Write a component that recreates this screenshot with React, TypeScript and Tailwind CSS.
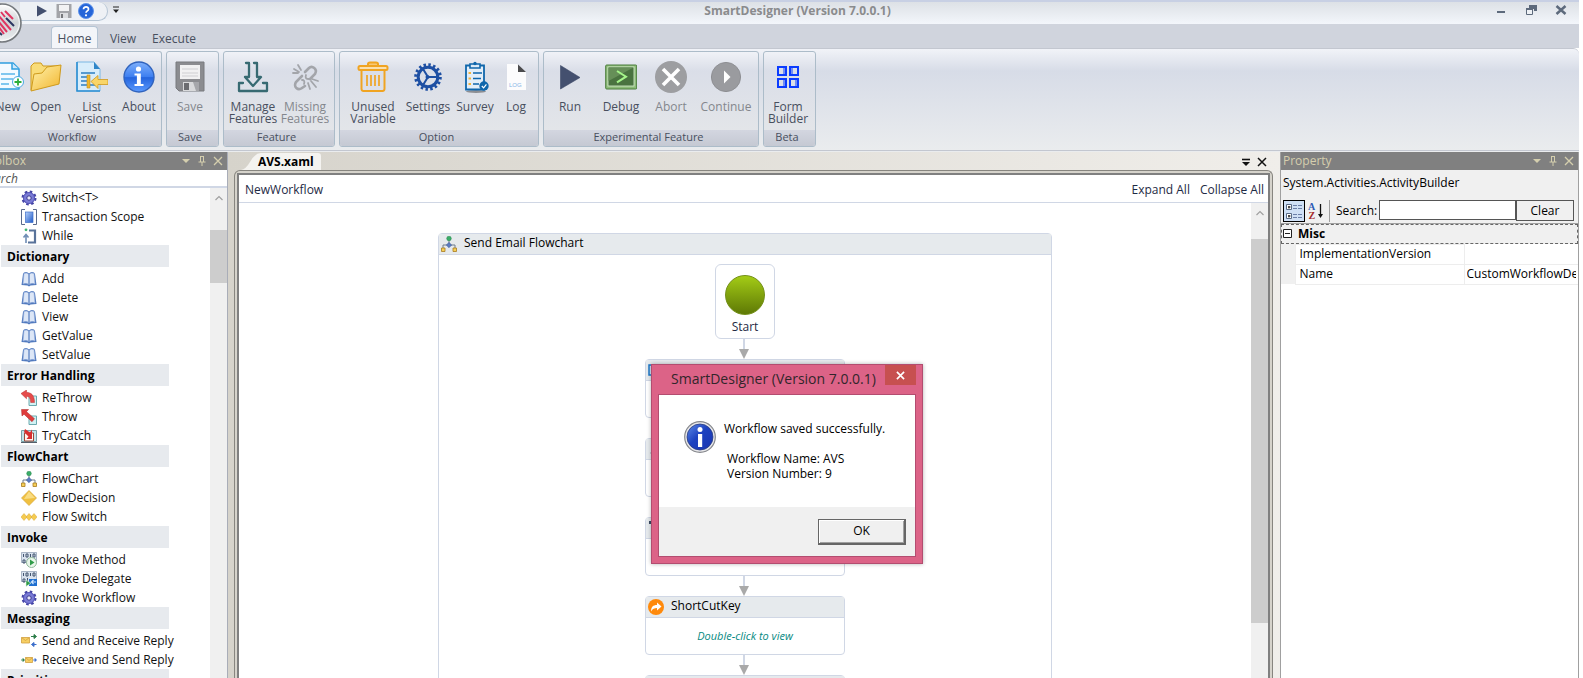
import type { ReactNode } from 'react'

/* ---------- ribbon icons (32x32) ---------- */

const Svg32 = ({ children }: { children: ReactNode }) => (
  <svg viewBox="0 0 32 32" className="h-8 w-8 shrink-0" aria-hidden="true">{children}</svg>
)

const NewIcon = () => (
  <Svg32>
    <path d="M5 2h16l6 6v20H5z" fill="#f4faff" stroke="#2f9fe0" strokeWidth="1.5" strokeLinejoin="round" />
    <path d="M20 2v6h7" fill="#cfe8fa" stroke="#2f9fe0" strokeWidth="1.5" />
    <path d="M9 13h14M9 18h12M9 23h8" stroke="#5ab6ea" strokeWidth="1.5" />
    <circle cx="26" cy="21" r="5.5" fill="#fff" stroke="#4aa9e2" />
    <path d="M26 17.5v7M22.5 21h7" stroke="#2fae3c" strokeWidth="1.8" />
  </Svg32>
)

const OpenIcon = () => (
  <Svg32>
    <defs>
      <linearGradient id="folder" x1="0" y1="0" x2="1" y2="1">
        <stop offset="0" stopColor="#fff3b0" />
        <stop offset="1" stopColor="#f2b52c" />
      </linearGradient>
    </defs>
    <path d="M1 29V5l3-3h7l2 3h14v5z" fill="#f9dc78" stroke="#cf9a1c" strokeLinejoin="round" />
    <path d="M1 30 4 13l8-1 5-6 14-2-2 19z" fill="url(#folder)" stroke="#cf9a1c" strokeLinejoin="round" />
  </Svg32>
)

const ListIcon = () => (
  <Svg32>
    <path d="M1 1h17l6 7v22H1z" fill="#d8edfb" stroke="#7ab8e4" />
    <path d="M1 1v29h23" fill="none" stroke="#2d8fd2" strokeWidth="1.6" />
    <path d="M18 1l6 7h-6z" fill="#2f86c8" />
    <path d="M5 12h14M5 16h6M5 20h6M5 24h6M14 24h7" stroke="#2c7fc2" strokeWidth="1.4" />
    <path d="M11 14h3v13h-3z" fill="#f0b82d" stroke="#c98f17" strokeWidth=".6" />
    <path d="M15 20.5l7-6v4h10v5H22v4z" fill="#f9d568" stroke="#cf981c" strokeWidth=".8" />
  </Svg32>
)

const AboutIcon = () => (
  <Svg32>
    <defs>
      <linearGradient id="about" x1="0" y1="0" x2="0" y2="1">
        <stop offset="0" stopColor="#7fb0fb" />
        <stop offset=".5" stopColor="#3c7ef0" />
        <stop offset=".52" stopColor="#2464dd" />
        <stop offset="1" stopColor="#5b9bff" />
      </linearGradient>
    </defs>
    <circle cx="16" cy="16" r="15" fill="url(#about)" stroke="#3063bd" strokeWidth="1.4" />
    <circle cx="15.5" cy="8" r="2.6" fill="#fff" />
    <path d="M11.5 12.5h6.3v10.5h2.7v2H11.5v-2h2.4v-8.500h-2.400z" fill="#fff" />
  </Svg32>
)

const FloppyIcon = () => (
  <Svg32>
    <path d="M2 1h28v29H5l-3-3z" fill="#8b8c90" stroke="#797a7e" />
    <path d="M6 4h20v14H6z" fill="#f1f1f2" />
    <path d="M8 8h16M8 12h16M8 15h16" stroke="#cfcfd2" />
    <path d="M9 21h16v9H9z" fill="#d9dadc" />
    <path d="M10 22h5v7h-5z" fill="#6c6d71" />
    <path d="M19 21h6v9h-3z" fill="#a6a7ab" />
  </Svg32>
)

const ManageIcon = () => (
  <Svg32>
    <g fill="none" stroke="#376a72" strokeWidth="2.3" strokeLinejoin="round" strokeLinecap="round">
      <path d="M9 2h3v14H8l8 9 8-9h-4V2h-3" />
      <path d="M6 22H2v8h28v-8h-4" />
    </g>
  </Svg32>
)

const MissingIcon = () => (
  <Svg32>
    <g fill="none" stroke="#a3a5aa" strokeWidth="2.6" strokeLinecap="round">
      <path d="M16 11l4-4c3-3 9 1 6 6l-5 5" />
      <path d="M16 25l-3 2c-4 3-9-1-6-6l6-6" />
      <path d="M17 14c-1 3 0 4 3 4M13 19c2 0 3 1 2 4" strokeWidth="1.8" />
      <path d="M5 8l5 3M9 4l3 5M4 12h5M19 22l2 6M22 20l5 6M23 18l6 2" strokeWidth="1.8" />
    </g>
  </Svg32>
)

const TrashIcon = () => (
  <Svg32>
    <g fill="none" stroke="#f0a422" strokeWidth="2" strokeLinejoin="round">
      <path d="M11 5V3q0-1.500 2-1.500h6q2 0 2 1.500v2" fill="#f7c877" />
      <rect x="1.5" y="5" width="29" height="4" rx="1.5" fill="#fae0b0" />
      <path d="M4.500 9.500V28q.2 2 2 2h19q1.800 0 2-2V9.500" />
      <path d="M10 14v11M14 14v11M18 14v11M22 14v11" strokeWidth="1.7" />
    </g>
  </Svg32>
)

const GearIcon = () => (
  <Svg32>
    <circle cx="16" cy="16" r="12" fill="none" stroke="#1d4fa3" strokeWidth="3.6" strokeDasharray="2.4 2.31" />
    <circle cx="16" cy="16" r="9.8" fill="none" stroke="#1d4fa3" strokeWidth="3" />
    <path d="M16 16h9M16 16l-5-8M16 16l-5 8" stroke="#1d4fa3" strokeWidth="2" />
    <circle cx="15.5" cy="16" r="2" fill="#1d4fa3" />
  </Svg32>
)

const SurveyIcon = () => (
  <Svg32>
    <ellipse cx="17" cy="30.5" rx="10" ry="1.5" fill="#8d8f94" />
    <path d="M7 4.500h18v24H7z" fill="#e3eef8" stroke="#0f66ab" strokeWidth="1.8" />
    <path d="M11 3h10v4H11z" fill="#dbeaf7" stroke="#0f66ab" strokeWidth="1.6" />
    <circle cx="16" cy="2.5" r="1.7" fill="#0f66ab" />
    <path d="M14 12h9M14 17.500h8M14 23h6" stroke="#0f66ab" strokeWidth="1.7" />
    <path d="M9.500 12h2.500M9.500 17.500h2.500M9.500 23h2.500" stroke="#f3b33d" strokeWidth="2.2" />
    <circle cx="25" cy="25" r="4.7" fill="#0f66ab" />
    <path d="M22.800 25l1.800 1.800 2.800-3.400" fill="none" stroke="#fff" strokeWidth="1.2" />
  </Svg32>
)

const LogIcon = () => (
  <Svg32>
    <path d="M7 3h10l9 8v18H7z" fill="#fcfcfd" />
    <path d="M18 3.500l8 7.500h-8z" fill="#4b4b4d" />
    <text x="9" y="26" fontSize="6" className="fill-[#84b4e6] font-['Liberation_Sans']">LOG</text>
  </Svg32>
)

const RunIcon = () => (
  <Svg32>
    <path d="M6.500 4.500v23.500L26 16.500z" fill="#44506f" stroke="#3a4665" strokeWidth=".6" />
  </Svg32>
)

const DebugIcon = () => (
  <Svg32>
    <rect x=".7" y="4" width="31" height="24" rx="1" fill="#8dbb79" stroke="#4a7d3c" />
    <rect x="3" y="6" width="26" height="19" fill="#4a7340" stroke="#dff3d4" strokeWidth=".8" />
    <path d="M3.500 6.500h25L3.500 20z" fill="#668f58" />
    <path d="M12 10l9 5.700-9 5.700" fill="none" stroke="#a5f58a" strokeWidth="2" />
  </Svg32>
)

const AbortIcon = () => (
  <Svg32>
    <circle cx="16" cy="16" r="16" fill="#9d9ea1" />
    <path d="M8 8l16 16M24 8L8 24" stroke="#fff" strokeWidth="3.6" />
  </Svg32>
)

const ContinueIcon = () => (
  <Svg32>
    <circle cx="16" cy="16" r="14.6" fill="#9a9b9f" stroke="#8e8f93" />
    <path d="M14 9.500v13l6.500-6.500z" fill="#fff" />
  </Svg32>
)

const FormIcon = () => (
  <Svg32>
    <g fill="none" stroke="#0b3cff" strokeWidth="2">
      <path d="M6 6h8v8H6zM18 6h8v8h-8zM6 18h8v8H6zM18 18h8v8h-8z" />
      <path d="M12 6v8M20 6v8M12 18v8M24 18v8" strokeWidth="1" />
    </g>
  </Svg32>
)

/* ---------- toolbox icons (16x16) ---------- */

const Svg16 = ({ children }: { children: ReactNode }) => (
  <svg viewBox="0 0 16 16" className="h-4 w-4 shrink-0" aria-hidden="true">{children}</svg>
)

const CogIcon = () => (
  <Svg16>
    <circle cx="8" cy="8" r="6" fill="#7373cf" stroke="#4444a4" strokeWidth="3" strokeDasharray="2.4 2.31" />
    <circle cx="8" cy="8" r="5.5" fill="#7a7bd6" stroke="#5252b3" strokeWidth=".8" />
    <circle cx="8" cy="8" r="2.2" fill="#e4e4fa" stroke="#39398f" />
  </Svg16>
)

const ScopeIcon = () => (
  <Svg16>
    <defs>
      <linearGradient id="scope" x1="0" y1="0" x2="1" y2="1">
        <stop offset="0" stopColor="#b8d2fb" />
        <stop offset="1" stopColor="#1f5ac8" />
      </linearGradient>
    </defs>
    <path d="M4 .5H.5v15H4M12 .5h3.500v15H12" fill="none" stroke="#5a6a8c" />
    <rect x="4.5" y="3" width="7.5" height="10.5" fill="url(#scope)" stroke="#3f6fca" strokeWidth=".7" />
  </Svg16>
)

const WhileIcon = () => (
  <Svg16>
    <path d="M8 2.500h6v12H7" fill="none" stroke="#59739a" strokeWidth="2.2" />
    <path d="M5 15V8M2.500 9.500L5 6.500l2.500 3" fill="none" stroke="#6f8db5" strokeWidth="1.6" />
    <circle cx="5" cy="1.8" r="1.4" fill="#3cb66e" />
  </Svg16>
)

const BookIcon = () => (
  <Svg16>
    <path d="M.5 14L2 3l1-1.500Q6 0 8 2.500 10 0 13 1.500L14 3l1.500 11-6 .5L8 15.500l-1.500-1z" fill="#4f78bd" />
    <path d="M3 2.500Q6 1 7.800 3.500v10Q5 11.500 2 13zM13 2.500Q10 1 8.200 3.500v10Q11 11.500 14 13z" fill="#dde7f7" stroke="#8ea9da" strokeWidth=".6" />
    <path d="M8 3v11" stroke="#6f90c8" />
  </Svg16>
)

const ReThrowIcon = () => (
  <Svg16>
    <path d="M8 6h7.500v9.500H8z" fill="#d2f2f4" stroke="#6aa9ae" />
    <path d="M0 3.500L5.500 0v2.300C10 2.500 13.500 5 13.500 12.500h-3.800C9.700 8.500 8.500 6.500 5.500 6.300v2.500z" fill="#e64b4b" stroke="#b83232" strokeWidth=".5" />
  </Svg16>
)

const ThrowIcon = () => (
  <Svg16>
    <path d="M8 7h7.500v8.500H8z" fill="#d2f2f4" stroke="#6aa9ae" />
    <path d="M.5.5h7L5.500 2.700l8 7-2.500 3-8-7.500L1 7z" fill="#e03c3c" stroke="#a82626" strokeWidth=".5" />
  </Svg16>
)

const TryCatchIcon = () => (
  <Svg16>
    <path d="M.5 2.500h15v11H.5z" fill="#c2e4ea" stroke="#7aa3ab" />
    <path d="M3.500 5h9v8h-9z" fill="#fff3ee" stroke="#9b4a3a" />
    <path d="M4 1l5 3.500 2-3V11H5.500l2-2.500L3 4z" fill="#d83030" />
    <path d="M0 14.500h16" stroke="#55606b" />
  </Svg16>
)

const FlowchartIcon = () => (
  <Svg16>
    <path d="M8 4v5M8 9H2v3M8 9h6v3" fill="none" stroke="#6f7c8d" />
    <circle cx="8" cy="2.5" r="2.3" fill="#3aad68" stroke="#24824a" strokeWidth=".5" />
    <path d="M8 6.500L10.700 9 8 11.700 5.300 9z" fill="#5c7cc0" stroke="#3d5b9e" strokeWidth=".6" />
    <path d="M.5 12h3.500v3.500H.5zM12 12h3.500v3.500H12z" fill="#f6cf58" stroke="#a87b1f" strokeWidth=".8" />
  </Svg16>
)

const DecisionIcon = () => (
  <Svg16>
    <path d="M8 .5L15.500 8 8 15.500.5 8z" fill="#f0c040" stroke="#d9a93a" strokeWidth=".7" />
    <path d="M8 1.500L14 8l-11 1z" fill="#f9dc82" />
  </Svg16>
)

const SwitchIcon = () => (
  <Svg16>
    <path d="M3 4.500L6 8l-3 3.500L0 8zM8 4.500L11 8l-3 3.500L5 8zM13 4.500L16 8l-3 3.500L10 8z" fill="#f5cb50" stroke="#d9a93a" strokeWidth=".5" />
  </Svg16>
)

const BinaryBase = () => (
  <>
    <path d="M.5.5h15v10H.5z" fill="#d9e2ee" stroke="#7c8da5" strokeWidth=".6" />
    <path d="M2.500 2v3M5 2h2v3H5zM9.500 2v3M12 2h2v3h-2zM2 8h2v3H2zM6.500 7v3" fill="none" stroke="#42546f" strokeWidth="1" />
  </>
)

const MethodIcon = () => (
  <Svg16>
    <BinaryBase />
    <circle cx="10.5" cy="10.5" r="5" fill="#e9f7ea" stroke="#91b89a" />
    <path d="M9 7.500v6l4.500-3z" fill="#2f9c48" />
  </Svg16>
)

const DelegateIcon = () => (
  <Svg16>
    <BinaryBase />
    <path d="M8 15V8h8v7z" fill="#1f6fd0" />
    <path d="M5 9v6.500l5-3.300z" fill="#2f9c48" stroke="#e6f4e8" strokeWidth=".6" />
    <path d="M15 11h-4M12.500 9l-2 2 2 2" fill="none" stroke="#cfe6ff" strokeWidth="1.2" />
  </Svg16>
)

const SendIcon = () => (
  <Svg16>
    <path d="M.5 4.500h8v5.500h-8z" fill="#f7cf63" stroke="#d0a040" strokeWidth=".8" />
    <path d="M.5 4.500l4 3 4-3" fill="none" stroke="#d0a040" strokeWidth=".8" />
    <path d="M10 3.500h3M13 1.500l2.500 2-2.500 2z" fill="#2c7d49" stroke="#2c7d49" />
    <path d="M15.500 11.500h-3M13 9.500l-2.500 2 2.500 2z" fill="#3c6fcb" stroke="#3c6fcb" />
  </Svg16>
)

const ReceiveIcon = () => (
  <Svg16>
    <path d="M4.500 5.500h7v5h-7z" fill="#f7cf63" stroke="#d0a040" strokeWidth=".8" />
    <path d="M4.500 5.500L8 8.500l3.500-3" fill="none" stroke="#d0a040" strokeWidth=".8" />
    <path d="M0 8h2M2 6.500L3.500 8 2 9.500z" fill="#2c7d49" stroke="#2c7d49" strokeWidth=".8" />
    <path d="M12 8h2M14 6.500L15.500 8 14 9.500z" fill="#3c6fcb" stroke="#3c6fcb" strokeWidth=".8" />
  </Svg16>
)

const ShortcutIcon = () => (
  <Svg16>
    <circle cx="8" cy="8" r="8" fill="#ff8a0c" />
    <path d="M3 12.500C3 8 5 6 9 6V3.500L13.500 7.500 9 11.500V9C6.500 9 4.500 9.500 3 12.500z" fill="#fff" />
  </Svg16>
)

/* ---------- ribbon ---------- */

type Tool = { icon: () => ReactNode; label: string; width: string; disabled?: boolean }

const ribbonGroups: { title: string; width: string; align: string; tools: Tool[] }[] = [
  {
    title: 'Workflow', width: 'w-[162px] rounded-l-none border-l-0', align: 'justify-end',
    tools: [
      { icon: NewIcon, label: 'New', width: 'w-[34px]' },
      { icon: OpenIcon, label: 'Open', width: 'w-[42px]' },
      { icon: ListIcon, label: 'List\nVersions', width: 'w-[50px]' },
      { icon: AboutIcon, label: 'About', width: 'w-[44px]' },
    ],
  },
  {
    title: 'Save', width: 'w-[53px]', align: 'justify-start',
    tools: [{ icon: FloppyIcon, label: 'Save', width: 'w-[46px]', disabled: true }],
  },
  {
    title: 'Feature', width: 'w-[112px]', align: 'justify-center',
    tools: [
      { icon: ManageIcon, label: 'Manage\nFeatures', width: 'w-[52px]' },
      { icon: MissingIcon, label: 'Missing\nFeatures', width: 'w-[52px]', disabled: true },
    ],
  },
  {
    title: 'Option', width: 'w-[200px]', align: 'justify-end',
    tools: [
      { icon: TrashIcon, label: 'Unused\nVariable', width: 'w-[54px]' },
      { icon: GearIcon, label: 'Settings', width: 'w-[56px]' },
      { icon: SurveyIcon, label: 'Survey', width: 'w-[38px]' },
      { icon: LogIcon, label: 'Log', width: 'w-[44px]' },
    ],
  },
  {
    title: 'Experimental Feature', width: 'w-[216px]', align: 'justify-start',
    tools: [
      { icon: RunIcon, label: 'Run', width: 'w-[52px]' },
      { icon: DebugIcon, label: 'Debug', width: 'w-[50px]' },
      { icon: AbortIcon, label: 'Abort', width: 'w-[50px]', disabled: true },
      { icon: ContinueIcon, label: 'Continue', width: 'w-[60px]', disabled: true },
    ],
  },
  {
    title: 'Beta', width: 'w-[53px]', align: 'justify-start',
    tools: [{ icon: FormIcon, label: 'Form\nBuilder', width: 'w-[48px]' }],
  },
]

function TitleBar() {
  return (
    <header className="relative flex h-6 shrink-0 items-start border-t-2 border-[#c8d0e4] bg-linear-to-b from-[#dde1e6] to-[#f3f6fb]">
      <svg viewBox="0 0 30 44" className="absolute left-0 top-0 z-10 h-11 w-[30px]" aria-hidden="true">
        <defs>
          <linearGradient id="orb" x1="0" y1="0" x2="0" y2="1">
            <stop offset="0" stopColor="#fdfdfd" />
            <stop offset=".5" stopColor="#cfd3d6" />
            <stop offset="1" stopColor="#eef1f3" />
          </linearGradient>
        </defs>
        <circle cx="2" cy="21" r="19" fill="url(#orb)" stroke="#75797d" strokeWidth="1.6" />
        <circle cx="2" cy="21" r="17.3" fill="none" stroke="#fff" strokeOpacity=".8" />
        <g strokeWidth="2" fill="none">
          <path d="M5 9l8 8M1 10l4 5M-1 14l12 14M-2 19l9 11M-2 24l6 8" stroke="#e03560" />
          <path d="M6 16l8 8M-6 26l8 7" stroke="#2c3561" />
        </g>
      </svg>
      <div className="ml-5 flex h-[19px] w-[88px] items-center rounded-r-full rounded-bl-xl border border-l-0 border-t-0 border-[#b4c4d4] bg-[#eef1f5] pl-4">
        <button type="button" aria-label="Run" className="mr-2">
          <svg viewBox="0 0 12 12" className="h-3 w-3"><path d="M1 .5v11L11 6z" fill="#44506f" /></svg>
        </button>
        <button type="button" aria-label="Save" className="mr-1.5">
          <svg viewBox="0 0 16 16" className="h-4 w-4">
            <path d="M.5 1h15v14H.5z" fill="#a3a4a8" />
            <path d="M3 2h10v6H3z" fill="#f2f2f3" />
            <path d="M4 10h8v5H4z" fill="#dcdde0" />
            <path d="M5 11h2v4H5z" fill="#77787c" />
          </svg>
        </button>
        <button type="button" aria-label="Help">
          <svg viewBox="0 0 16 16" className="h-4 w-4">
            <circle cx="8" cy="8" r="7.5" fill="#2565d8" stroke="#5f93ea" />
            <path d="M5.500 6.300C5.500 3 10.700 3.200 10.500 6.200 10.400 7.800 8 8 8 9.800" fill="none" stroke="#fff" strokeWidth="1.7" />
            <circle cx="8" cy="12.3" r="1.1" fill="#fff" />
          </svg>
        </button>
      </div>
      <button type="button" aria-label="Customize quick access" className="ml-1 mt-1">
        <svg viewBox="0 0 8 8" className="h-2 w-2"><path d="M1 1h6" stroke="#222" /><path d="M1 3.500h6L4 7z" fill="#222" /></svg>
      </button>
      <h1 className="flex-1 pr-5 text-center text-xs leading-[18px] font-bold text-[#8a8b8d]">SmartDesigner (Version 7.0.0.1)</h1>
      <div className="flex items-center gap-[18px] pr-3 pt-[3px] text-[#5d6a7c]">
        <button type="button" aria-label="Minimize">
          <svg viewBox="0 0 12 10" className="h-[10px] w-3"><path d="M2 6h8v2H2z" fill="currentColor" /></svg>
        </button>
        <button type="button" aria-label="Restore">
          <svg viewBox="0 0 12 10" className="h-[10px] w-3">
            <path d="M4 0h8v6h-3v-2H4z" fill="currentColor" />
            <path d="M1.500 4.500h6v5h-6z" fill="#eef1f5" stroke="currentColor" />
            <path d="M1 3h7v2H1z" fill="currentColor" />
          </svg>
        </button>
        <button type="button" aria-label="Close">
          <svg viewBox="0 0 12 10" className="h-[10px] w-3"><path d="M1.500 1l9 8M10.500 1l-9 8" stroke="currentColor" strokeWidth="2.5" /></svg>
        </button>
      </div>
    </header>
  )
}

function Ribbon() {
  return (
    <>
      <nav className="flex h-6 shrink-0 items-end bg-[#d0d4dd] pl-[51px] text-xs text-[#484f5e]">
        <button type="button" className="h-[22px] w-[47px] rounded-t-sm border border-b-0 border-[#b4c4d4] bg-[#f3f5f9] pt-0.5">Home</button>
        <button type="button" className="h-[22px] w-[50px] pt-[3px]">View</button>
        <button type="button" className="h-[22px] w-[52px] pt-[3px]">Execute</button>
      </nav>
      <section className="flex h-[103px] shrink-0 gap-1 rounded-tr-md border-y border-[#c3c7d0] bg-linear-to-b from-[#f1f3f8] from-0% via-[#d7dce7] via-22% to-[#eaecee] to-100% pt-0.5">
        {ribbonGroups.map(group => (
          <div
            key={group.title}
            className={`flex h-24 shrink-0 flex-col overflow-hidden rounded-[3px] border border-[#acbcc9] bg-linear-to-b from-[#f0f2f7] from-0% via-[#dadee8] via-20% to-[#e4e6e9] to-90% ${group.width}`}
          >
            <div className={`flex flex-1 ${group.align}`}>
              {group.tools.map(({ icon: Icon, label, width, disabled }) => (
                <button
                  key={label}
                  type="button"
                  disabled={disabled}
                  className={`flex shrink-0 flex-col items-center gap-2 pt-[9px] text-xs leading-3 whitespace-pre text-[#484f5e] disabled:text-[#84878d] ${width}`}
                >
                  <Icon />
                  <span>{label}</span>
                </button>
              ))}
            </div>
            <div className="h-4 bg-linear-to-b from-[#d3d6e0] to-[#c5c9d3] pr-[5px] text-center text-[11px] leading-[14px] text-[#484f5e]">
              <span className={group.title === 'Workflow' ? 'pr-3' : ''}>{group.title}</span>
            </div>
          </div>
        ))}
      </section>
    </>
  )
}

/* ---------- docked panels ---------- */

function PanelHeader({ title, inset }: { title: string; inset: string }) {
  return (
    <div className="flex h-[18px] shrink-0 items-center overflow-hidden bg-[#808080] pr-1 text-[#d5cfae]">
      <h2 className={`flex-1 text-xs ${inset}`}>{title}</h2>
      <div className="flex items-center gap-1.5">
        <button type="button" aria-label={`${title} menu`}>
          <svg viewBox="0 0 10 10" className="h-[10px] w-[10px]"><path d="M1 3h8L5 7z" fill="currentColor" /></svg>
        </button>
        <button type="button" aria-label={`Pin ${title}`}>
          <svg viewBox="0 0 10 10" className="h-[10px] w-[10px]"><path d="M3 .5h4M3.500 0v6M6.500 0v6M1.500 6h7M5 6v4" fill="none" stroke="currentColor" /></svg>
        </button>
        <button type="button" aria-label={`Close ${title}`}>
          <svg viewBox="0 0 10 10" className="h-[10px] w-[10px]"><path d="M1 1l8 8M9 1L1 9" stroke="currentColor" strokeWidth="1.3" /></svg>
        </button>
      </div>
    </div>
  )
}

const ScrollArrow = () => (
  <svg viewBox="0 0 10 6" className="mx-auto h-[6px] w-[10px]" aria-hidden="true">
    <path d="M1.500 5L5 1.500 8.500 5" fill="none" stroke="#a0a0a0" strokeWidth="1.2" />
  </svg>
)

const toolbox: { category?: string; items: { icon: () => ReactNode; label: string }[] }[] = [
  {
    items: [
      { icon: CogIcon, label: 'Switch<T>' },
      { icon: ScopeIcon, label: 'Transaction Scope' },
      { icon: WhileIcon, label: 'While' },
    ],
  },
  {
    category: 'Dictionary',
    items: ['Add', 'Delete', 'View', 'GetValue', 'SetValue'].map(label => ({ icon: BookIcon, label })),
  },
  {
    category: 'Error Handling',
    items: [
      { icon: ReThrowIcon, label: 'ReThrow' },
      { icon: ThrowIcon, label: 'Throw' },
      { icon: TryCatchIcon, label: 'TryCatch' },
    ],
  },
  {
    category: 'FlowChart',
    items: [
      { icon: FlowchartIcon, label: 'FlowChart' },
      { icon: DecisionIcon, label: 'FlowDecision' },
      { icon: SwitchIcon, label: 'Flow Switch' },
    ],
  },
  {
    category: 'Invoke',
    items: [
      { icon: MethodIcon, label: 'Invoke Method' },
      { icon: DelegateIcon, label: 'Invoke Delegate' },
      { icon: CogIcon, label: 'Invoke Workflow' },
    ],
  },
  {
    category: 'Messaging',
    items: [
      { icon: SendIcon, label: 'Send and Receive Reply' },
      { icon: ReceiveIcon, label: 'Receive and Send Reply' },
    ],
  },
  { category: 'Primitives', items: [] },
]

function Toolbox() {
  return (
    <aside className="flex w-[228px] shrink-0 flex-col overflow-hidden border-r border-[#a9adb8] bg-white">
      <PanelHeader title="Toolbox" inset="-ml-[19px]" />
      <input
        type="text"
        aria-label="Search toolbox"
        placeholder="Search"
        className="-ml-[18px] h-[18px] shrink-0 border-b-2 border-[#d0d7e5] text-xs italic outline-none placeholder:text-[#555]"
      />
      <div className="flex min-h-0 flex-1">
        <div className="flex-1 overflow-hidden pl-px">
          {toolbox.map(({ category, items }) => (
            <section key={category ?? 'top'}>
              {category && <h3 className="mb-0.5 h-[22px] w-[168px] bg-[#e7eaee] pl-1.5 text-xs leading-6 font-bold">{category}</h3>}
              <ul>
                {items.map(({ icon: Icon, label }) => (
                  <li key={label} className="flex h-[19px] items-center gap-[5px] pl-5 text-xs whitespace-nowrap text-[#111]">
                    <Icon />
                    <span>{label}</span>
                  </li>
                ))}
              </ul>
            </section>
          ))}
        </div>
        <div className="w-[17px] shrink-0 bg-[#f0f0f0] pt-[7px]">
          <ScrollArrow />
          <div className="mt-[29px] h-[53px] bg-[#cdcdcd]" />
        </div>
      </div>
    </aside>
  )
}

/* ---------- designer ---------- */

const Arrow = () => (
  <svg viewBox="0 0 12 20" className="h-5 w-3" aria-hidden="true">
    <path d="M4 0h2v11H4z" fill="#d0d7e5" />
    <path d="M0 10h10L5 20z" fill="#a9a9a9" />
  </svg>
)

function ActivityNode({ title, icon }: { title: string; icon: ReactNode }) {
  return (
    <div className="h-[59px] w-[200px] rounded-sm border border-[#d0d7e5] bg-white">
      <div className="flex h-[21px] items-center gap-[7px] border-b border-[#d0d7e5] bg-[#e6eaed] pl-0.5 text-xs">
        {icon}
        <span className="pb-0.5">{title}</span>
      </div>
      {title && <p className="text-center text-[11px] leading-9 italic text-[#078a82]">Double-click to view</p>}
    </div>
  )
}

function Designer() {
  return (
    <main className="flex min-w-0 flex-1 flex-col bg-linear-to-r from-[#d6d3cb] to-[#f0eeea] pr-[7px] pl-1.5">
      <div className="flex h-[18px] shrink-0 items-end pl-[7px]">
        <button type="button" className="relative h-[17px] w-[80px] pl-[17px] text-left text-xs leading-4 font-bold text-black">
          <svg viewBox="0 0 80 17" className="absolute left-0 top-0 h-[17px] w-[80px]" aria-hidden="true">
            <path d="M0 17Q5 16 9 9 14 0 20 0h57q3 0 3 3v14z" fill="#f4f3f0" />
          </svg>
          <span className="relative">AVS.xaml</span>
        </button>
        <div className="ml-auto flex gap-1.5 self-center pr-1.5 pt-0.5">
          <button type="button" aria-label="Document list">
            <svg viewBox="0 0 10 10" className="h-[10px] w-[10px]"><path d="M1 2.500h8" stroke="#111" strokeWidth="1.6" /><path d="M1 5h8L5 9z" fill="#111" /></svg>
          </button>
          <button type="button" aria-label="Close document">
            <svg viewBox="0 0 10 10" className="h-[10px] w-[10px]"><path d="M1 1l8 8M9 1L1 9" stroke="#111" strokeWidth="1.5" /></svg>
          </button>
        </div>
      </div>
      <div className="flex min-h-0 flex-1 rounded-t-md border border-b-0 border-[#87857f] bg-[#d6d3cb] px-0.5 pt-0.5">
        <div className="flex min-w-0 flex-1 flex-col border-2 border-b-0 border-[#808080] bg-white">
          <div className="flex h-7 shrink-0 items-center gap-[10px] border-b border-[#d0d7e5] pt-0.5 pl-1.5 pr-1 text-xs text-[#1e2a44]">
            <span className="flex-1">NewWorkflow</span>
            <button type="button">Expand All</button>
            <button type="button">Collapse All</button>
          </div>
          <div className="flex min-h-0 flex-1">
            <div className="flex flex-1 flex-col items-center overflow-hidden pt-[30px]">
              <div className="w-[614px] shrink-0 rounded-t-sm border border-[#d0d7e5]">
                <div className="flex h-[21px] items-center gap-[7px] border-b border-[#d0d7e5] bg-[#e6eaed] pl-0.5 text-xs leading-4">
                  <FlowchartIcon />
                  <span className="pb-0.5">Send Email Flowchart</span>
                </div>
                <div className="flex flex-col items-center pt-[9px]">
                  <div className="flex h-[75px] w-[60px] flex-col items-center rounded-md border border-[#d0d7e5] pt-[10px] text-xs text-[#1e2a44]">
                    <div className="h-10 w-10 rounded-full border border-[#738f18] bg-linear-to-b from-[#a4cc16] to-[#5f7a06]" />
                    <span className="pt-1">Start</span>
                  </div>
                  <Arrow />
                  <ActivityNode title="" icon={<svg viewBox="0 0 16 16" className="h-4 w-4"><path d="M1 3h14v10H1z" fill="#cfe4f7" stroke="#1e78c8" strokeWidth="1.5" /></svg>} />
                  <Arrow />
                  <ActivityNode title="" icon={<svg viewBox="0 0 16 16" className="h-4 w-4"><path d="M2 12h12" stroke="#aab0b8" /></svg>} />
                  <Arrow />
                  <ActivityNode title="" icon={<svg viewBox="0 0 16 16" className="h-4 w-4"><path d="M1 1h8v3H1z" fill="#3a4a63" /></svg>} />
                  <Arrow />
                  <ActivityNode title="ShortCutKey" icon={<ShortcutIcon />} />
                  <Arrow />
                  <ActivityNode title="" icon={null} />
                </div>
              </div>
            </div>
            <div className="w-[17px] shrink-0 bg-[#f0f0f0] pt-[7px]">
              <ScrollArrow />
              <div className="mt-[23px] h-[384px] bg-[#cdcdcd]" />
            </div>
          </div>
        </div>
      </div>
    </main>
  )
}

function PropertyPanel() {
  return (
    <aside className="flex w-[299px] shrink-0 flex-col overflow-hidden border-x border-[#a0a0a0] bg-white">
      <PanelHeader title="Property" inset="pl-0.5" />
      <div className="shrink-0 border-b border-[#a0a0a0] bg-[#f0f0f0] pr-1 pl-0.5">
        <p className="pt-1 pb-2 text-xs leading-[18px]">System.Activities.ActivityBuilder</p>
        <div className="flex h-[23px] items-start text-xs">
          <button type="button" aria-label="Categorized" className="h-[22px] w-[22px] border border-black bg-[#cfe0f5]">
            <svg viewBox="0 0 20 20" className="h-5 w-5">
              <path d="M2.500 3.500h5v5h-5zM2.500 12.500h5v5h-5z" fill="#fff" stroke="#5a6c86" />
              <path d="M4 6h2.500M5 5v2.500M4 15h2.500M5 14v2.500" stroke="#111" />
              <path d="M9 4.500h4M9 7.500h4M9 13.500h4M9 16.500h4M14 4.500h4M14 7.500h4M14 13.500h4M14 16.500h4" stroke="#6b7fa8" />
            </svg>
          </button>
          <button type="button" aria-label="Alphabetical" className="ml-0.5 h-[22px] w-[18px]">
            <svg viewBox="0 0 18 20" className="h-5 w-[18px]">
              <text x="1" y="9" fontSize="10" className="fill-[#2d5bb5] font-['Liberation_Serif'] font-bold">A</text>
              <text x="1.5" y="18" fontSize="10" className="fill-[#a52a2a] font-['Liberation_Serif'] font-bold">Z</text>
              <path d="M13.500 3v12" stroke="#111" strokeWidth="1.3" />
              <path d="M11 13h5l-2.500 4z" fill="#111" />
            </svg>
          </button>
          <div className="ml-1 h-[22px] w-px bg-[#a0a0a0]" />
          <label htmlFor="property-search" className="pl-1.5 leading-[22px]">Search:</label>
          <input id="property-search" type="text" className="ml-0.5 h-5 min-w-0 flex-1 border border-[#555] bg-white px-1 outline-none" />
          <button type="button" className="h-[21px] w-[58px] border border-[#555] bg-[#f0f0f0]">Clear</button>
        </div>
      </div>
      <table className="w-full table-fixed border-collapse text-xs">
        <colgroup>
          <col className="w-[14px]" />
          <col className="w-[169px]" />
          <col />
        </colgroup>
        <tbody>
          <tr className="h-5 bg-[#f0f0f0] outline-1 -outline-offset-1 outline-dashed outline-[#666]">
            <th colSpan={3} className="text-left">
              <span className="flex items-center gap-1.5 pl-0.5">
                <svg viewBox="0 0 9 9" className="h-[9px] w-[9px]"><path d="M.5.5h8v8h-8z" fill="#fff" stroke="#222" /><path d="M2 4.500h5" stroke="#222" /></svg>
                Misc
              </span>
            </th>
          </tr>
          <tr className="h-5">
            <td className="bg-[#f0f0f0]" />
            <td className="border border-[#ededed] pl-1">ImplementationVersion</td>
            <td className="border-b border-[#ededed]" />
          </tr>
          <tr className="h-5">
            <td className="bg-[#f0f0f0]" />
            <td className="border border-[#ededed] pl-1">Name</td>
            <td className="border-b border-[#ededed] pr-0.5 pl-0.5">
              <div className="overflow-hidden whitespace-nowrap">CustomWorkflowDesigner</div>
            </td>
          </tr>
        </tbody>
      </table>
    </aside>
  )
}

function SavedDialog() {
  return (
    <div
      role="dialog"
      aria-labelledby="dialog-title"
      className="absolute left-[651px] top-[364px] z-20 flex h-[200px] w-[272px] flex-col border border-[#b34d70] bg-[#dc6387] px-[6px] pb-[6px] shadow-[0_0_4px_rgba(0,0,0,0.3)]"
    >
      <div className="flex h-[29px] items-start">
        <h2 id="dialog-title" className="flex-1 pl-1 text-center text-sm leading-7 whitespace-nowrap text-[#32262b]">SmartDesigner (Version 7.0.0.1)</h2>
        <button type="button" aria-label="Close dialog" className="flex h-5 w-[31px] items-center justify-center bg-[#c75050]">
          <svg viewBox="0 0 10 10" className="h-[9px] w-[9px]"><path d="M1 1l8 8M9 1L1 9" stroke="#fff" strokeWidth="1.8" /></svg>
        </button>
      </div>
      <div className="flex flex-1 flex-col border border-[#b34d70] bg-white text-xs">
        <div className="flex flex-1 gap-2 pt-[26px] pl-[25px]">
          <svg viewBox="0 0 32 32" className="h-8 w-8 shrink-0" aria-hidden="true">
            <defs>
              <linearGradient id="info" x1="0" y1="0" x2="1" y2="1">
                <stop offset="0" stopColor="#5f8ce8" />
                <stop offset=".45" stopColor="#1d42c0" />
                <stop offset="1" stopColor="#1a35b0" />
              </linearGradient>
            </defs>
            <circle cx="16" cy="16" r="15.3" fill="#e8e8ea" stroke="#85878c" strokeWidth="1.2" />
            <circle cx="16" cy="16" r="13" fill="url(#info)" stroke="#2a3c80" strokeWidth=".8" />
            <circle cx="16" cy="8.5" r="2.5" fill="#fff" />
            <path d="M14 13h4.200v13H14z" fill="#fff" />
          </svg>
          <div className="leading-[15px]">
            <p>Workflow saved successfully.</p>
            <p className="pt-[15px] pl-[3px]">Workflow Name: AVS<br />Version Number: 9</p>
          </div>
        </div>
        <div className="flex h-[49px] items-center justify-end bg-[#f0f0f0] pr-[9px]">
          <button type="button" className="h-[26px] w-[88px] border border-r-2 border-b-2 border-[#666] bg-[#f0f0f0] shadow-[inset_1px_1px_0_#fff,inset_-1px_-1px_0_#a0a0a0]">OK</button>
        </div>
      </div>
    </div>
  )
}

export default function App() {
  return (
    <div className="relative flex h-screen overflow-hidden bg-white pr-1 font-['Open_Sans','Noto_Sans',sans-serif] text-black">
      <div className="flex min-w-0 flex-1 flex-col">
        <TitleBar />
        <Ribbon />
        <div className="flex min-h-0 flex-1 bg-[#eaecee] pt-px">
          <Toolbox />
          <Designer />
          <PropertyPanel />
        </div>
      </div>
      <SavedDialog />
    </div>
  )
}
